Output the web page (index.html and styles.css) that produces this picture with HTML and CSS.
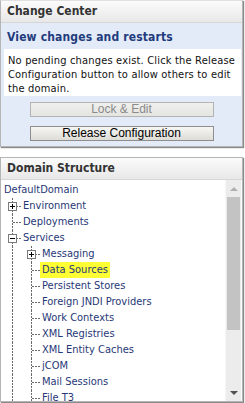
FILE: index.html
```html
<!DOCTYPE html>
<html>
<head>
<meta charset="utf-8">
<link rel="stylesheet" href="styles.css">
</head>
<body>
<div class="panel cc">
  <div class="hdr">Change Center</div>
  <div class="cc-body">
    <div class="sub">View changes and restarts</div>
    <div class="msg">No pending changes exist. Click the Release Configuration button to allow others to edit the domain.</div>
    <div class="btns">
      <button class="btn" disabled>Lock &amp; Edit</button>
      <button class="btn">Release Configuration</button>
    </div>
  </div>
</div>
<div class="panel ds">
  <div class="hdr">Domain Structure</div>
  <div class="ds-body">
    <div class="tree">
      <div class="row"><span class="lbl">DefaultDomain</span></div>
      <div class="row"><span class="cell v t"><span class="exp plus"></span></span><span class="lbl">Environment</span></div>
      <div class="row"><span class="cell v t"></span><span class="lbl">Deployments</span></div>
      <div class="row"><span class="cell v t"><span class="exp minus"></span></span><span class="lbl">Services</span></div>
      <div class="row"><span class="cell v"></span><span class="cell v t"><span class="exp plus"></span></span><span class="lbl">Messaging</span></div>
      <div class="row"><span class="cell v"></span><span class="cell v t"></span><span class="lbl sel">Data Sources</span></div>
      <div class="row"><span class="cell v"></span><span class="cell v t"></span><span class="lbl">Persistent Stores</span></div>
      <div class="row"><span class="cell v"></span><span class="cell v t"></span><span class="lbl">Foreign JNDI Providers</span></div>
      <div class="row"><span class="cell v"></span><span class="cell v t"></span><span class="lbl">Work Contexts</span></div>
      <div class="row"><span class="cell v"></span><span class="cell v t"></span><span class="lbl">XML Registries</span></div>
      <div class="row"><span class="cell v"></span><span class="cell v t"></span><span class="lbl">XML Entity Caches</span></div>
      <div class="row"><span class="cell v"></span><span class="cell v t"></span><span class="lbl">jCOM</span></div>
      <div class="row"><span class="cell v"></span><span class="cell v t"></span><span class="lbl">Mail Sessions</span></div>
      <div class="row"><span class="cell v"></span><span class="cell v t"></span><span class="lbl">File T3</span></div>
    </div>
    <div class="sb">
      <div class="sb-btn"><span class="tri up"></span></div>
      <div class="sb-thumb"></div>
      <div class="sb-track"></div>
      <div class="sb-btn"><span class="tri down"></span></div>
    </div>
  </div>
</div>
</body>
</html>
```
FILE: styles.css
```css
html, body {
  margin: 0;
  padding: 0;
  background: #fff;
}
body {
  width: 245px;
  height: 403px;
  overflow: hidden;
  font-family: "DejaVu Sans Condensed", "DejaVu Sans", sans-serif;
  font-size: 11px;
}
.panel {
  width: 241px;
  border: 1px solid #b5b5b5;
  box-shadow: 1px 1px 1px #8a8a8a;
  background: #fff;
}
.cc {
  border-top-color: #e0e0e0;
}
.ds {
  margin-top: 10px;
}
.hdr {
  height: 21px;
  line-height: 21px;
  padding-left: 6px;
  font-weight: bold;
  font-size: 12px;
  color: #333;
  background: linear-gradient(#fbfbfb, #e8e8e8);
  border-bottom: 1px solid #d6d6d6;
}
.cc-body {
  background: #e3ebf8;
  padding: 0 1px 5px 3px;
}
.sub {
  height: 26px;
  line-height: 28px;
  padding-left: 3px;
  font-weight: bold;
  font-size: 12px;
  letter-spacing: 0.15px;
  color: #1f3b7d;
}
.msg {
  background: #fff;
  padding: 5px 4px 0 4px;
  line-height: 14px;
  letter-spacing: 0.18px;
  color: #111;
}
.btns {
  display: flex;
  flex-direction: column;
  align-items: center;
  gap: 9px;
  padding-top: 6px;
  padding-right: 2px;
}
.btn {
  box-sizing: border-box;
  width: 184px;
  height: 15px;
  padding: 0;
  margin: 0;
  border: 1px solid #8e8e8e;
  border-radius: 0;
  background: linear-gradient(#f6f6f4, #dddcd6);
  font-family: "Liberation Sans", Arial, sans-serif;
  font-size: 12px;
  line-height: 13px;
  color: #000;
}
.btn:disabled {
  color: #8a8a8a;
  border-color: #b4b4b4;
  background: linear-gradient(#f0f0ee, #e4e4e0);
}
.ds-body {
  display: flex;
  height: 221px;
  overflow: hidden;
}
.tree {
  flex: 1;
  padding: 2px 0 0 3px;
  overflow: hidden;
}
.row {
  display: flex;
  height: 16px;
  align-items: stretch;
}
.lbl {
  line-height: 16px;
  padding: 0 2px 0 0;
  white-space: nowrap;
  color: #273777;
}
.lbl.sel {
  background: #ffff33;
  margin-left: -2px;
  padding-left: 2px;
}
.cell {
  position: relative;
  flex: none;
  width: 19px;
  height: 16px;
}
.cell.v::before {
  content: "";
  position: absolute;
  left: 8px;
  top: 0;
  width: 1px;
  height: 16px;
  background: repeating-linear-gradient(to bottom, #6a6a6a 0 2px, transparent 2px 3px);
}
.cell.t::after {
  content: "";
  position: absolute;
  left: 9px;
  top: 8px;
  width: 9px;
  height: 1px;
  background: repeating-linear-gradient(to right, #6a6a6a 0 2px, transparent 2px 3px);
}
.exp {
  position: absolute;
  left: 4px;
  top: 4px;
  width: 7px;
  height: 7px;
  border: 1px solid #7a7a7a;
  background: #fff;
  z-index: 1;
}
.exp::before {
  content: "";
  position: absolute;
  left: 1px;
  top: 3px;
  width: 5px;
  height: 1px;
  background: #000;
}
.exp.plus::after {
  content: "";
  position: absolute;
  left: 3px;
  top: 1px;
  width: 1px;
  height: 5px;
  background: #000;
}
.sb {
  flex: none;
  width: 15px;
  margin-right: 1px;
  display: flex;
  flex-direction: column;
  background: #ececec;
  border-left: 1px solid #f6f6f6;
}
.sb-btn {
  height: 17px;
  display: flex;
  align-items: center;
  justify-content: center;
  flex: none;
}
.sb-thumb {
  height: 133px;
  margin: 0 1px;
  background: #c3c3c3;
  flex: none;
}
.sb-track {
  flex: 1;
}
.tri {
  width: 0;
  height: 0;
  border-left: 4px solid transparent;
  border-right: 4px solid transparent;
}
.tri.up {
  border-bottom: 4px solid #b0b0b0;
}
.tri.down {
  border-top: 4px solid #505050;
}
```
